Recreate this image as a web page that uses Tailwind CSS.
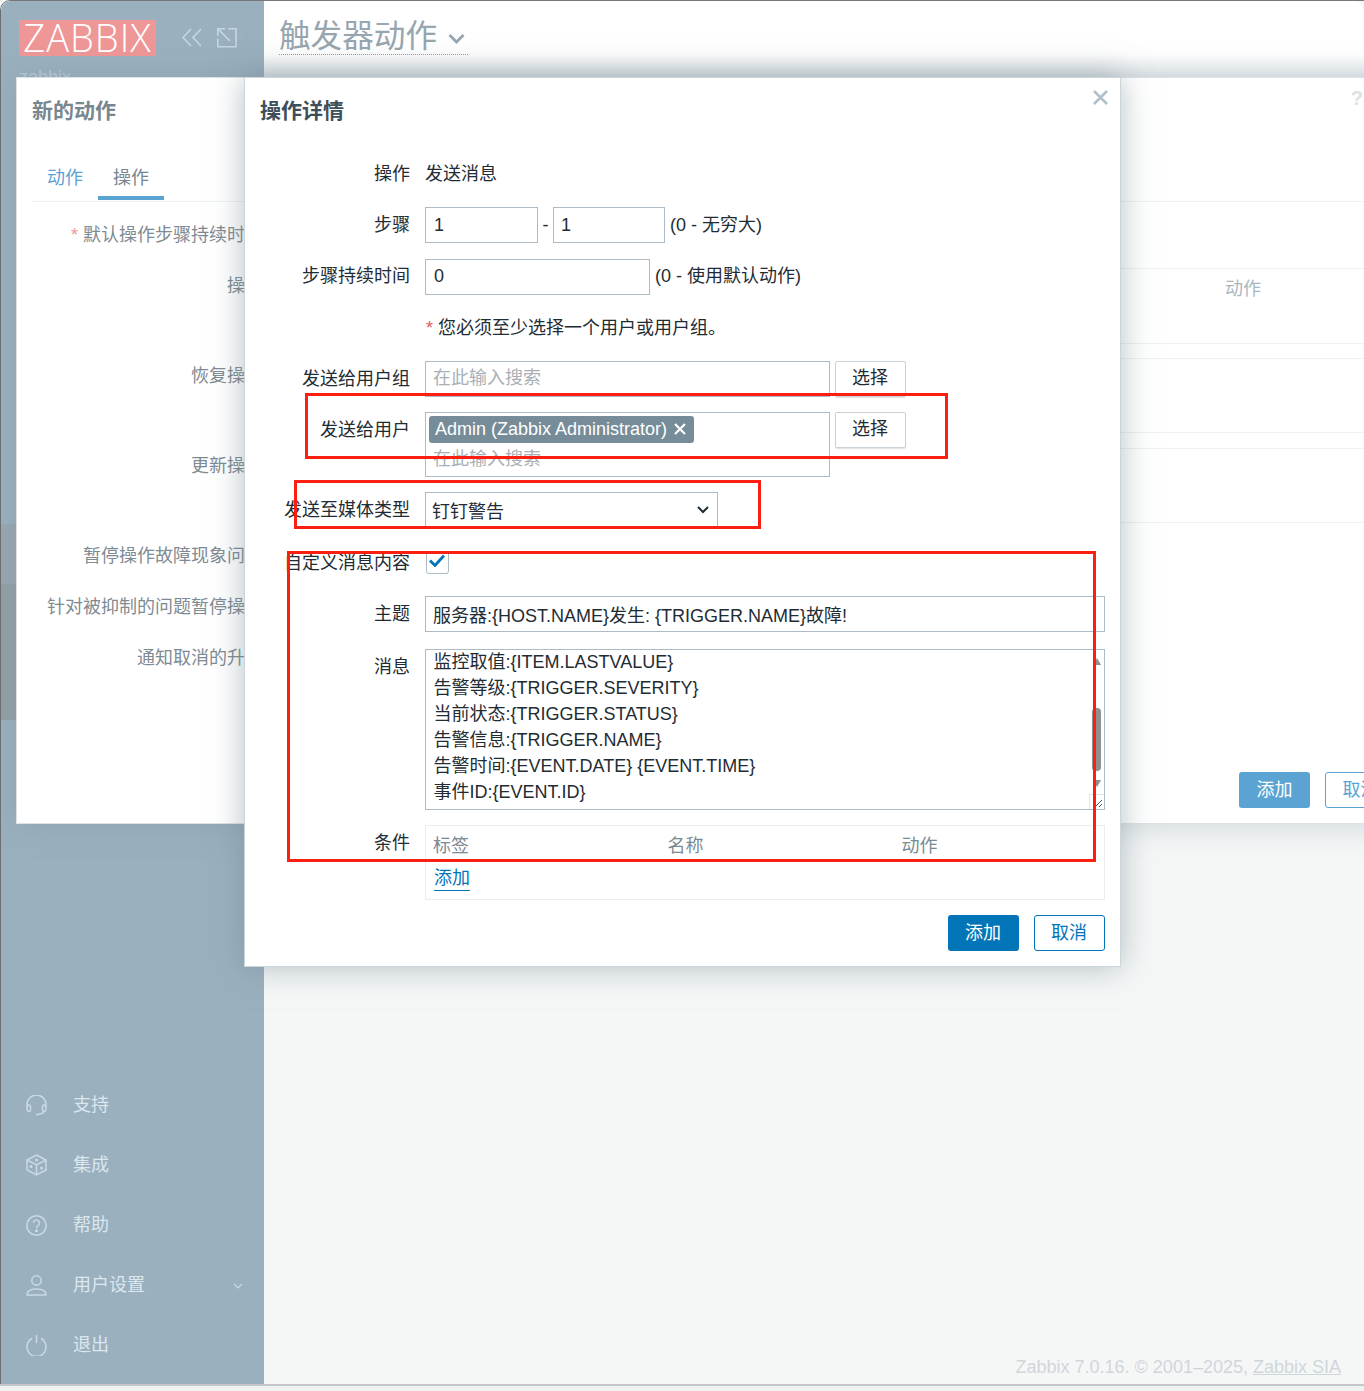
<!DOCTYPE html>
<html lang="zh-CN">
<head>
    <meta charset="UTF-8">
    <title>触发器动作</title>
    <script src="https://cdn.jsdelivr.net/npm/@tailwindcss/browser@4"></script>
</head>
<body class="bg-white">
<div class="relative w-[1364px] h-[1391px] overflow-hidden bg-[#f5f7f7] text-[18px] leading-[26px] text-[#1f2c33] font-['Liberation_Sans','Noto_Sans_CJK_SC',sans-serif]">

    <!-- page frame -->
    <div class="flex h-[1384px] border-t border-t-[#777] border-l border-l-[#6e6e6e] rounded-tl-[10px]">
        <aside class="relative w-[263px] shrink-0 flex flex-col bg-[#9ab0bf] rounded-tl-[10px] text-[#dbe7ee]">
            <div class="flex items-center h-[36px] mt-[19px] ml-[18px]">
                <div class="w-[137px] h-[36px] pb-[3px] flex items-center justify-center bg-[#ef9696] text-white text-[38px] tracking-[1px] font-['Open_Sans',sans-serif] font-light leading-none">ZABBIX</div>
                <svg class="ml-[25px] w-[22px] h-[22px]" viewBox="0 0 22 22" fill="none" stroke="#c4d6e2" stroke-width="1.6"><path d="M10 2 2 10.500 10 19M20 2 12 10.500 20 19"/></svg>
                <svg class="ml-[14px] w-[20px] h-[20px]" viewBox="0 0 20 20" fill="none" stroke="#c4d6e2" stroke-width="1.6"><path d="M.8 8V.8H8M.8.8l12 12M11 .8h8v18H.8v-8"/></svg>
            </div>
            <div class="ml-[18px] mt-[8px] text-[#b9cad6] text-[18px]">zabbix</div>
            <div class="absolute left-0 top-[523px] w-[16px] h-[60px] bg-[#99a7b0]"></div>
            <div class="absolute left-0 top-[583px] w-[16px] h-[136px] bg-[#929fa7]"></div>
            <nav class="mt-auto pb-[9px] flex flex-col">
                <div class="flex items-center h-[60px] pl-[25px]">
                    <svg class="w-[21px] h-[21px]" viewBox="0 0 21 21" fill="none" stroke="#c8dae6" stroke-width="1.500"><path d="M1 13V9.500a9.500 9.500 0 0 1 19 0V13M1 13c0-2 1-3 2-3s1.500.5 1.500 1.500V15c0 1-.5 1.500-1.500 1.500S1 15 1 13ZM20 13c0-2-1-3-2-3s-1.500.5-1.500 1.500V15c0 1 .5 1.500 1.500 1.500s2-1.500 2-3.500ZM18 16.500c-.5 1.500-2 2-3 2.300l-5 1"/></svg>
                    <span class="ml-[26px]">支持</span>
                </div>
                <div class="flex items-center h-[60px] pl-[25px]">
                    <svg class="w-[21px] h-[22px]" viewBox="0 0 21 22" fill="none" stroke="#c8dae6" stroke-width="1.500"><path d="M10.500 1 20 6v10l-9.500 5L1 16V6ZM1 6l9.500 5L20 6M10.500 11v10"/><circle cx="10.500" cy="6" r=".8" fill="#c8dae6"/><circle cx="5" cy="12.500" r=".8" fill="#c8dae6"/><circle cx="15.500" cy="14" r=".8" fill="#c8dae6"/></svg>
                    <span class="ml-[26px]">集成</span>
                </div>
                <div class="flex items-center h-[60px] pl-[25px]">
                    <svg class="w-[21px] h-[21px]" viewBox="0 0 21 21" fill="none" stroke="#c8dae6" stroke-width="1.500"><circle cx="10.500" cy="10.500" r="9.700"/><path d="M7.500 8a3 3 0 1 1 4.700 2.500c-1.200.8-1.700 1.300-1.700 2.700"/><circle cx="10.500" cy="15.800" r=".8" fill="#c8dae6"/></svg>
                    <span class="ml-[26px]">帮助</span>
                </div>
                <div class="flex items-center h-[60px] pl-[25px]">
                    <svg class="w-[21px] h-[21px]" viewBox="0 0 21 21" fill="none" stroke="#c8dae6" stroke-width="1.500"><circle cx="10.500" cy="5.500" r="4.700"/><path d="M1 20c0-4 4-6 9.500-6s9.500 2 9.500 6Z"/></svg>
                    <span class="ml-[26px]">用户设置</span>
                    <svg class="ml-[88px] mt-[2px] w-[10px] h-[6px]" viewBox="0 0 10 6" fill="none" stroke="#c8dae6" stroke-width="1.100"><path d="m1 1 4 4 4-4"/></svg>
                </div>
                <div class="flex items-center h-[60px] pl-[25px]">
                    <svg class="w-[21px] h-[21px]" viewBox="0 0 21 21" fill="none" stroke="#c8dae6" stroke-width="1.500"><path d="M6 3.500a9.500 9.500 0 1 0 9 0M10.500 0v8"/></svg>
                    <span class="ml-[26px]">退出</span>
                </div>
            </nav>
        </aside>
        <main class="relative flex-1 flex flex-col">
            <header class="h-[76px] pl-[15px] pt-[16px] bg-gradient-to-b from-white from-70% to-[#e8ecee] rounded-tr-[10px]">
                <div class="inline-flex items-center w-[189px] h-[38px] border-b border-dotted border-b-[#8f9ba3] text-[31.600px] leading-[38px] text-[#97a6af]">
                    <span class="pt-[1px]">触发器动作</span>
                    <svg class="ml-[11px] mt-[6px] w-[17px] h-[12px]" viewBox="0 0 17 12" fill="none" stroke="#97a6af" stroke-width="2.800"><path d="m1.500 2 7 7 7-7"/></svg>
                </div>
            </header>
            <div class="mt-auto pr-[23px] pb-[4px] text-right text-[#cfd6db]">Zabbix 7.0.16. © 2001–2025, <span class="underline decoration-[#cfd6db]">Zabbix SIA</span></div>
        </main>
    </div>
    <div class="h-[7px] border-t-2 border-t-[#c4c8ca] bg-[#eef2f3]"></div>

    <!-- action window behind the dialog -->
    <div class="absolute left-[16px] top-[77px] w-[1400px] h-[747px] bg-white border border-[#dce2e6] shadow-[0_0_30px_rgba(120,140,150,0.35)] text-[#7f8b93]">
        <h2 class="ml-[15px] mt-[20px] h-[26px] text-[21px] font-bold text-[#77868f]">新的动作</h2>
        <div class="mx-[15px] mt-[40px] h-[38px] border-b border-b-[#eef1f2] flex">
            <span class="ml-[15px] pt-[1px] text-[#5ba3d2]">动作</span>
            <span class="ml-[15px] w-[66px] h-[36px] pt-[1px] text-center border-b-4 border-b-[#5ba3d2] text-[#76858f]">操作</span>
        </div>
        <div class="w-[228px] text-right whitespace-nowrap">
            <div class="mt-[20px] h-[26px]"><span class="text-[#ef9696] mr-[5px]">*</span>默认操作步骤持续时</div>
            <div class="mt-[25px] h-[26px]">操</div>
            <div class="mt-[64px] h-[26px]">恢复操</div>
            <div class="mt-[64px] h-[26px]">更新操</div>
            <div class="mt-[64px] h-[26px]">暂停操作故障现象问</div>
            <div class="mt-[25px] h-[26px]">针对被抑制的问题暂停操</div>
            <div class="mt-[25px] h-[26px]">通知取消的升</div>
        </div>
        <!-- right part, seen past the dialog -->
        <div class="absolute left-[1104px] top-0 w-[300px] h-full">
            <div class="absolute right-[58px] top-[7px] text-[#dde2e5] text-[20px] font-bold">?</div>
            <div class="absolute inset-x-0 top-[190px] border-t border-t-[#eef1f2]"></div>
            <div class="absolute left-[104px] top-[198px] text-[#a9b7c0]">动作</div>
            <div class="absolute inset-x-0 top-[265px] border-t border-t-[#eef1f2]"></div>
            <div class="absolute inset-x-0 top-[280px] border-t border-t-[#eef1f2]"></div>
            <div class="absolute inset-x-0 top-[354px] border-t border-t-[#eef1f2]"></div>
            <div class="absolute inset-x-0 top-[370px] border-t border-t-[#eef1f2]"></div>
            <div class="absolute inset-x-0 top-[444px] border-t border-t-[#eef1f2]"></div>
            <div class="absolute left-[118px] top-[694px] flex gap-[15px]">
                <div class="w-[71px] h-[36px] pb-[1px] flex items-center justify-center rounded-[3px] bg-[#5ba3d2] text-white">添加</div>
                <div class="w-[71px] h-[36px] pb-[1px] flex items-center justify-center rounded-[3px] border border-[#5ba3d2] bg-white text-[#5ba3d2]">取消</div>
            </div>
        </div>
    </div>

    <!-- operation details dialog -->
    <div class="absolute left-[244px] top-[77px] w-[877px] h-[890px] bg-white border border-[#ccd5da] shadow-[0_0_30px_rgba(110,130,140,0.5)]">
        <svg class="absolute right-[12px] top-[12px] w-[15px] h-[15px]" viewBox="0 0 15 15" stroke="#b0bfc8" stroke-width="2.600"><path d="m1 1 13 13M14 1 1 14"/></svg>
        <h2 class="ml-[15px] mt-[20px] h-[26px] text-[21px] font-bold text-[#3d4f5a]">操作详情</h2>

        <div class="mt-[31px] flex flex-col">
            <div class="flex items-center h-[36px] pt-[2px]">
                <label class="w-[165px] text-right whitespace-nowrap">操作</label>
                <span class="ml-[15px]">发送消息</span>
            </div>
            <div class="mt-[16px] flex items-center h-[36px]">
                <label class="w-[165px] text-right">步骤</label>
                <div class="ml-[15px] w-[113px] h-[36px] pl-[8px] flex items-center border border-[#acbbc4]">1</div>
                <span class="w-[15px] text-center">-</span>
                <div class="w-[112px] h-[36px] pl-[7px] flex items-center border border-[#acbbc4]">1</div>
                <span class="ml-[5px]">(0 - 无穷大)</span>
            </div>
            <div class="mt-[16px] flex items-center h-[36px]">
                <label class="w-[165px] text-right pb-[2px]">步骤持续时间</label>
                <div class="ml-[15px] w-[225px] h-[36px] pl-[8px] pb-[2px] flex items-center border border-[#acbbc4]">0</div>
                <span class="ml-[5px] pb-[2px]">(0 - 使用默认动作)</span>
            </div>
            <div class="mt-[14px] h-[36px] pt-[2px] flex items-center pl-[181px]"><span class="text-[#e45959] mr-[5px]">*</span>您必须至少选择一个用户或用户组。</div>
            <div class="mt-[16px] flex h-[36px]">
                <label class="w-[165px] text-right pt-[5px]">发送给用户组</label>
                <div class="ml-[15px] w-[405px] h-[36px] pl-[7px] pb-[2px] flex items-center border border-[#acbbc4] text-[#a9b0b5]">在此输入搜索</div>
                <button class="ml-[5px] w-[71px] h-[36px] pr-[1px] pb-[2px] rounded-[2px] border border-[#c9d2d8] shadow-[0_1px_1px_rgba(0,0,0,0.12)]">选择</button>
            </div>
            <div class="mt-[15px] flex h-[65px]">
                <label class="w-[165px] text-right pt-[5px]">发送给用户</label>
                <div class="ml-[15px] w-[405px] h-[65px] pl-[3px] pt-[3px] border border-[#acbbc4]">
                    <div class="inline-flex items-center h-[27px] pl-[6px] pr-[8px] pb-[1px] rounded-[3px] bg-[#768d99] text-white">Admin (Zabbix Administrator)
                        <svg class="ml-[7px] w-[12px] h-[12px]" viewBox="0 0 12 12" stroke="#fff" stroke-width="2.200"><path d="m1 1 10 10M11 1 1 11"/></svg>
                    </div>
                    <div class="pl-[4px] mt-[3px] text-[#a9b0b5]">在此输入搜索</div>
                </div>
                <button class="ml-[5px] w-[71px] h-[36px] pr-[1px] pb-[2px] rounded-[2px] border border-[#c9d2d8] shadow-[0_1px_1px_rgba(0,0,0,0.12)]">选择</button>
            </div>
            <div class="mt-[15px] flex items-center h-[36px]">
                <label class="w-[165px] text-right whitespace-nowrap">发送至媒体类型</label>
                <div class="ml-[15px] w-[293px] h-[36px] pl-[6px] pr-[8px] flex items-center justify-between border border-[#acbbc4]">
                    <span class="pt-[4px]">钉钉警告</span>
                    <svg class="w-[12px] h-[8px]" viewBox="0 0 12 8" fill="none" stroke="#1f2c33" stroke-width="2"><path d="m1 1 5 5 5-5"/></svg>
                </div>
            </div>
            <div class="mt-[16px] flex items-center h-[36px]">
                <label class="w-[165px] text-right whitespace-nowrap pt-[2px]">自定义消息内容</label>
                <div class="ml-[16px] w-[23px] h-[23px] pr-[1px] pb-[3px] flex items-center justify-center rounded-[3px] border border-[#acbbc4]">
                    <svg class="w-[16px] h-[13px]" viewBox="0 0 16 13" fill="none" stroke="#0275b8" stroke-width="2.800"><path d="m1 6.500 5 5L15 1.500"/></svg>
                </div>
            </div>
            <div class="mt-[16px] flex items-center h-[36px]">
                <label class="w-[165px] text-right">主题</label>
                <div class="ml-[15px] w-[680px] h-[36px] pl-[7px] pt-[3px] flex items-center border border-[#acbbc4] whitespace-nowrap">服务器:{HOST.NAME}发生: {TRIGGER.NAME}故障!</div>
            </div>
            <div class="mt-[17px] flex h-[161px]">
                <label class="w-[165px] text-right pt-[5px]">消息</label>
                <div class="relative ml-[15px] w-[680px] h-[161px] border border-[#acbbc4]">
                    <div class="pl-[7.500px] -mt-[1px]">
                        <div>监控取值:{ITEM.LASTVALUE}</div>
                        <div>告警等级:{TRIGGER.SEVERITY}</div>
                        <div>当前状态:{TRIGGER.STATUS}</div>
                        <div>告警信息:{TRIGGER.NAME}</div>
                        <div>告警时间:{EVENT.DATE} {EVENT.TIME}</div>
                        <div>事件ID:{EVENT.ID}</div>
                    </div>
                    <div class="absolute right-[3px] top-[8px] w-0 h-0 border-x-[4.500px] border-x-transparent border-b-[7px] border-b-[#8f8f8f]"></div>
                    <div class="absolute right-[3px] top-[58px] w-[9px] h-[63px] rounded-[4px] bg-[#8f8f8f]"></div>
                    <div class="absolute right-[3px] top-[130px] w-0 h-0 border-x-[4.500px] border-x-transparent border-t-[7px] border-t-[#8f8f8f]"></div>
                    <div class="absolute right-0 bottom-0 w-[15px] h-[15px] border-t border-l border-[#dfe4e7]">
                        <svg class="w-[14px] h-[14px]" viewBox="0 0 14 14" stroke="#555" stroke-width="1"><path d="m5 12 7-7M9 12l3-3"/></svg>
                    </div>
                </div>
            </div>
            <div class="mt-[15px] flex h-[75px]">
                <label class="w-[165px] text-right pt-[5px]">条件</label>
                <div class="ml-[15px] w-[680px] h-[75px] pl-[7px] border border-[#ebeef0]">
                    <div class="flex pt-[7px] text-[#7b8a93]">
                        <span class="w-[234.500px]">标签</span>
                        <span class="w-[234px]">名称</span>
                        <span>动作</span>
                    </div>
                    <a class="inline-block ml-[1px] mt-[7px] text-[#0275b8] border-b border-b-[#0275b8] leading-[24px]">添加</a>
                </div>
            </div>
            <div class="mt-[15px] mr-[15px] flex justify-end gap-[15px]">
                <button class="w-[71px] h-[36px] pr-[1px] rounded-[3px] bg-[#0275b8] text-white">添加</button>
                <button class="w-[71px] h-[36px] pr-[1px] rounded-[3px] border border-[#0275b8] text-[#0275b8]">取消</button>
            </div>
        </div>
    </div>

    <!-- red annotation boxes drawn on the screenshot -->
    <div class="absolute left-[305px] top-[393px] w-[643px] h-[66px] border-[3px] border-[#fb1f12]"></div>
    <div class="absolute left-[294px] top-[480px] w-[467px] h-[49px] border-[3px] border-[#fb1f12]"></div>
    <div class="absolute left-[287px] top-[551px] w-[809px] h-[311px] border-[3px] border-[#fb1f12]"></div>
</div>
</body>
</html>
